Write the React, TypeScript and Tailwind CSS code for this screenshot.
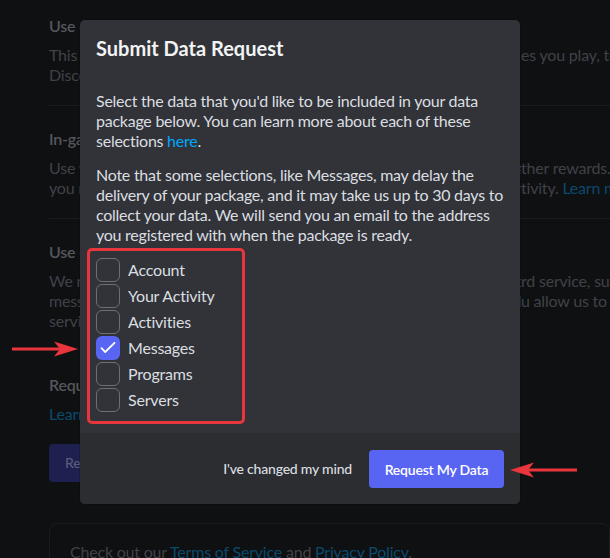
import React from "react";

const font = { fontFamily: "Lato, 'Liberation Sans', sans-serif" };

function Check({ checked, label }: { checked?: boolean; label: string }) {
  return (
    <div className="flex h-[26px] items-start gap-2">
      {checked ? (
        <div className="flex h-6 w-6 items-center justify-center rounded-[6px] bg-[#5865f2]">
          <svg width="24" height="24" viewBox="0 0 24 24" fill="none">
            <path d="M5.5 12.2 L9.2 16 L18.5 6.8" stroke="#ffffff" strokeWidth="1.8" strokeLinecap="round" strokeLinejoin="round" />
          </svg>
        </div>
      ) : (
        <div className="h-6 w-6 rounded-[6px] border border-[#6d6f78]" />
      )}
      <span className="text-[16px] leading-6 text-[#dbdee1]">{label}</span>
    </div>
  );
}

function BgLine({ left, right }: { left: string; right?: React.ReactNode }) {
  return (
    <div className="flex whitespace-nowrap">
      <span className="w-[472px] shrink-0 overflow-hidden">{left}</span>
      {right && <span>{right}</span>}
    </div>
  );
}

export default function App() {
  return (
    <div
      className="relative h-[558px] w-[610px] overflow-hidden bg-[#0f1012] tracking-[-0.2px]"
      style={font}
    >
      {/* dimmed page behind */}
      <div className="pl-[49px] pt-4 text-[16px] leading-5">
        <div className="font-semibold text-[#55575d]">Use data to personalize my Discord experience</div>
        <div className="mt-[9px] text-[#404248]">
          <BgLine
            left="This setting allows us to use information, such as who you talk to and what gam"
            right="es you play, to personalize"
          />
          <BgLine left="Discord for you." />
        </div>
        <div className="mt-5 h-px w-[600px] bg-[#1b1c1f]" />
        <div className="mt-[23px] font-semibold text-[#55575d]">In-game rewards (aka Quests)</div>
        <div className="mt-[9px] text-[#404248]">
          <BgLine
            left="Use your account information and activity to give you in-game items and o"
            right="ther rewards. If"
          />
          <BgLine
            left="you mute this, you may still see Quests, but we won't personalize them to your ac"
            right={
              <>
                tivity. <span className="text-[#0a4a6c]">Learn more</span>
              </>
            }
          />
        </div>
        <div className="mt-5 h-px w-[600px] bg-[#1b1c1f]" />
        <div className="mt-[23px] font-semibold text-[#55575d]">Use data to make Discord work</div>
        <div className="mt-[9px] text-[#404248]">
          <BgLine
            left="We need to store and process some data in order to provide you the basic Disco"
            right="rd service, such"
          />
          <BgLine
            left="messages, what servers you're in and your Direct Messages. By using Discord, yo"
            right="u allow us to provide"
          />
          <BgLine left="service." />
        </div>
        <div className="mt-[44px] font-semibold text-[#55575d]">Request all of my Data</div>
        <div className="mt-[9px] text-[#0a4a6c]">Learn more about how to get a copy of your personal data.</div>
        <div className="mt-5 flex h-[38px] w-[160px] items-center rounded-[4px] bg-[#1e2050] px-4 text-[14px] font-medium text-[#5a5c7a]">
          Request Data
        </div>
        <div className="mt-[41px] h-[80px] rounded-lg border border-[#1b1c1f] px-5 pt-[18px] text-[#404248]">
          Check out our <span className="text-[#0a4a6c]">Terms of Service</span> and{" "}
          <span className="text-[#0a4a6c]">Privacy Policy</span>.
        </div>
      </div>

      {/* modal */}
      <div className="absolute left-[80px] top-[20px] w-[440px] overflow-hidden rounded-[5px] bg-[#313338] shadow-[0_0_0_1px_rgba(0,0,0,0.15)]">
        <div className="px-4 pt-4">
          <h1 className="text-[20px] font-bold leading-6 tracking-normal text-[#f2f3f5]">Submit Data Request</h1>
          <div className="mt-[31px] whitespace-nowrap text-[16px] leading-5 tracking-[-0.25px] text-[#dbdee1]">
            <div>
              <div>Select the data that you'd like to be included in your data</div>
              <div>package below. You can learn more about each of these</div>
              <div>
                selections <span className="text-[#00a8fc]">here</span>.
              </div>
            </div>
            <div className="mt-[14px]">
              <div>Note that some selections, like Messages, may delay the</div>
              <div>delivery of your package, and it may take us up to 30 days to</div>
              <div>collect your data. We will send you an email to the address</div>
              <div>you registered with when the package is ready.</div>
            </div>
          </div>
          <div className="relative mt-[13px] pb-[19px]">
            <div className="pointer-events-none absolute left-[-9px] top-[-10px] h-[176px] w-[158px] rounded-[5px] border-[3px] border-[#e8363c]" />
            <Check label="Account" />
            <Check label="Your Activity" />
            <Check label="Activities" />
            <Check checked label="Messages" />
            <Check label="Programs" />
            <Check label="Servers" />
          </div>
        </div>
        <div className="flex h-[71px] items-start justify-end gap-[17px] bg-[#2b2d31] px-4 pt-[17px]">
          <span className="mt-[9px] text-[14px] font-medium leading-5 text-[#dbdee1]">I've changed my mind</span>
          <div className="flex h-[38px] w-[135px] items-center justify-center rounded-[4px] bg-[#5865f2] text-[14px] font-semibold text-white">
            Request My Data
          </div>
        </div>
      </div>

      {/* annotation arrows */}
      <svg className="absolute left-0 top-[340px]" width="80" height="20" viewBox="0 0 80 20">
        <rect x="12" y="7.5" width="50" height="3" fill="#e8363c" />
        <path d="M78 9 L54 1.5 L60 9 L54 16.5 Z" fill="#e8363c" />
      </svg>
      <svg className="absolute left-[505px] top-[460px]" width="80" height="20" viewBox="0 0 80 20">
        <rect x="20" y="8.5" width="52" height="3" fill="#e8363c" />
        <path d="M5 10 L29 2.5 L23 10 L29 17.5 Z" fill="#e8363c" />
      </svg>
    </div>
  );
}
